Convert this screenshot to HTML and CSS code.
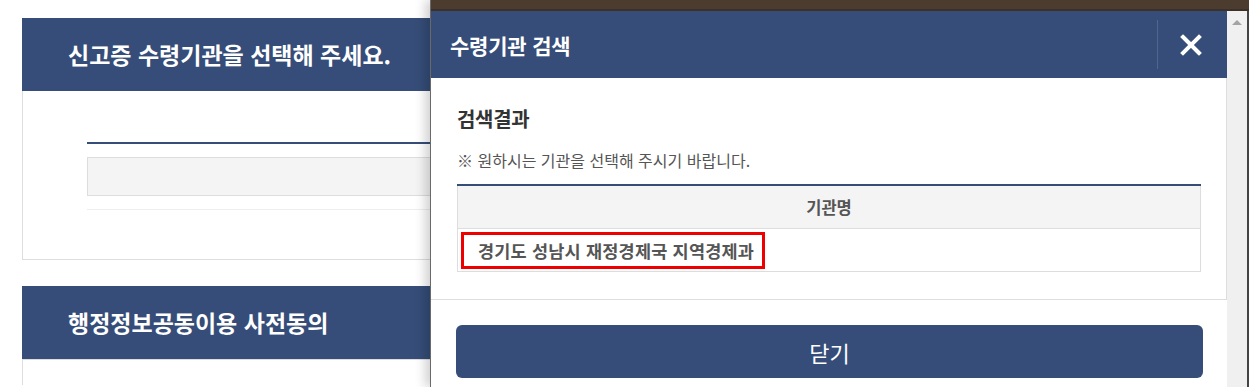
FILE: index.html
```html
<!DOCTYPE html>
<html lang="ko">
<head>
<meta charset="UTF-8">
<meta name="viewport" content="width=device-width, initial-scale=1.0">
<title>수령기관 검색</title>
<link rel="stylesheet" href="styles.css">
</head>
<body>
<div class="page">
    <div class="panel">
        <div class="panel-head">신고증 수령기관을 선택해 주세요.</div>
        <div class="panel-body">
            <div class="field-line"></div>
            <div class="field-box"></div>
            <div class="field-rule"></div>
        </div>
    </div>
    <div class="panel panel-last">
        <div class="panel-head">행정정보공동이용 사전동의</div>
        <div class="panel-body panel-open"></div>
    </div>
</div>

<!-- 팝업 창 -->
<div class="popup">
    <div class="titlebar"></div>
    <div class="frame">
        <div class="content">
            <div class="pop-head">
                <h2>수령기관 검색</h2>
                <button class="close-btn" type="button" aria-label="닫기">
                    <svg width="22" height="22" viewBox="0 0 22 22">
                        <path d="M3 3 L19 19 M19 3 L3 19" stroke="#fff" stroke-width="4" stroke-linecap="square"/>
                    </svg>
                </button>
            </div>
            <div class="pop-body">
                <h3>검색결과</h3>
                <p class="note">※ 원하시는 기관을 선택해 주시기 바랍니다.</p>
                <table class="result">
                    <thead>
                        <tr><th>기관명</th></tr>
                    </thead>
                    <tbody>
                        <tr><td><span class="pick">경기도 성남시 재정경제국 지역경제과</span></td></tr>
                    </tbody>
                </table>
            </div>
            <div class="pop-foot">
                <button class="close-wide" type="button">닫기</button>
            </div>
        </div>
        <div class="scrollbar"><span class="arrow-up"></span></div>
    </div>
</div>
</body>
</html>
```

FILE: styles.css
```css
body {
    font-family: "Noto Sans CJK KR", "Noto Sans", sans-serif;
    margin: 0;
    padding: 0;
    background-color: #fff;
    overflow: hidden;
    height: 387px;
}
.page {
    padding: 18px 0 0 22px;
}
.panel {
    width: 900px;
    margin-bottom: 26px;
}
.panel-last {
    margin-bottom: 0;
}
.panel-head {
    height: 73px;
    line-height: 73px;
    padding-left: 46px;
    background-color: #354d78;
    color: #fff;
    font-size: 23px;
    font-weight: bold;
    letter-spacing: 0;
}
.panel-body {
    height: 169px;
    border: 1px solid #ddd;
    border-top: none;
    padding: 51px 0 0 64px;
    box-sizing: border-box;
}
.panel-open {
    height: 26px;
    padding: 0;
    border-top: 1px solid #ddd;
    border-bottom: none;
}
.field-line {
    height: 2px;
    background-color: #354d78;
}
.field-box {
    height: 39px;
    margin-top: 13px;
    border: 1px solid #ddd;
    background-color: #f4f4f4;
    box-sizing: border-box;
}
.field-rule {
    height: 1px;
    margin-top: 13px;
    background-color: #eee;
}

.popup {
    position: absolute;
    top: 0;
    left: 430px;
    right: 0;
    bottom: 0;
    display: flex;
    flex-direction: column;
    border-left: 1px solid #6a6a6a;
    box-shadow: -5px 0 10px rgba(0, 0, 0, 0.18);
}
.titlebar {
    height: 9px;
    background-color: #4b3c2f;
    border-bottom: 2px solid #3b3128;
}
.frame {
    flex: 1;
    display: flex;
}
.content {
    flex: 1;
    background-color: #fff;
}
.scrollbar {
    width: 20px;
    background-color: #f0f0f0;
    border-right: 2px solid #444;
    position: relative;
}
.arrow-up {
    position: absolute;
    top: 9px;
    left: 5px;
    border-left: 5px solid transparent;
    border-right: 5px solid transparent;
    border-bottom: 5px solid #a3a3a3;
}
.pop-head {
    height: 67px;
    display: flex;
    align-items: center;
    background-color: #354d78;
}
.pop-head h2 {
    flex: 1;
    margin: 0;
    padding-left: 19px;
    color: #fff;
    font-size: 21px;
    font-weight: bold;
    letter-spacing: -0.2px;
}
.close-btn {
    width: 66px;
    height: 49px;
    margin-right: 4px;
    padding: 0;
    background: none;
    border: none;
    border-left: 1px solid rgba(255, 255, 255, 0.14);
    display: flex;
    align-items: center;
    justify-content: center;
    cursor: pointer;
}
.pop-body {
    padding: 28px 25px 27px 26px;
    border-right: 1px solid #ddd;
    border-bottom: 1px solid #ddd;
}
.pop-body h3 {
    margin: 0;
    font-size: 20px;
    line-height: 26px;
    color: #333;
    letter-spacing: -0.3px;
}
.note {
    margin: 18px 0 0;
    font-size: 16px;
    line-height: 20px;
    color: #555;
}
.result {
    width: 100%;
    margin-top: 14px;
    border-collapse: collapse;
    border-top: 2px solid #354d78;
}
.result th, .result td {
    height: 42px;
    padding: 0;
    border: 1px solid #ddd;
    border-top: none;
    font-size: 16.5px;
    color: #555;
}
.result th {
    background-color: #f4f4f4;
    font-weight: bold;
}
.result td {
    text-align: left;
    padding-left: 3px;
    font-size: 17.5px;
    font-weight: bold;
    letter-spacing: 0.2px;
}
.pick {
    display: inline-block;
    height: 31px;
    line-height: 31px;
    padding: 0 8px 0 14px;
    border: 3px solid #e00;
}
.pop-foot {
    padding: 25px 24px 0 25px;
}
.close-wide {
    display: block;
    width: 100%;
    height: 53px;
    background-color: #354d78;
    color: #fff;
    font-family: inherit;
    font-size: 22px;
    border: none;
    border-radius: 6px;
    cursor: pointer;
}
```
